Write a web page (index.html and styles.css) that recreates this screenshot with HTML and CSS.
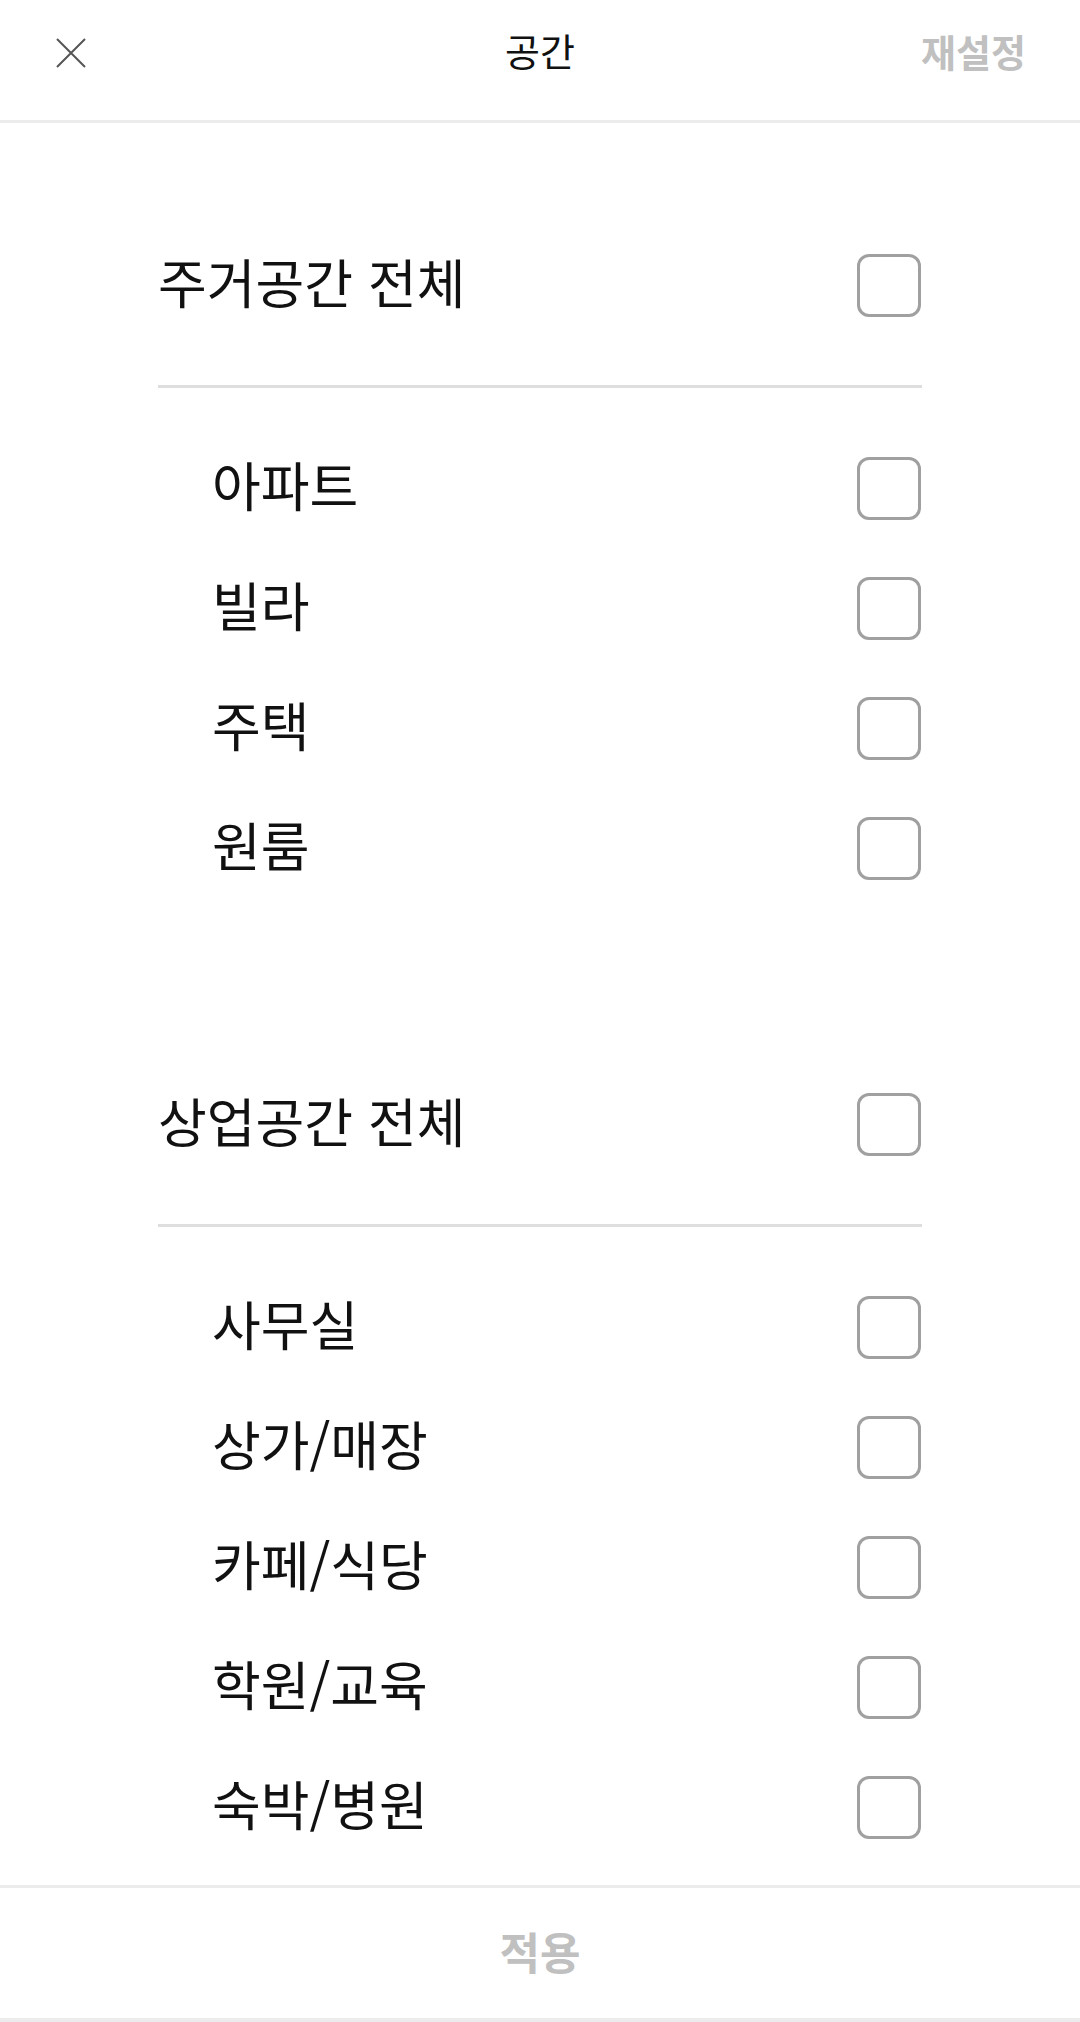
FILE: index.html
```html
<!DOCTYPE html>
<html lang="ko">
<head>
    <meta charset="UTF-8">
    <meta name="viewport" content="width=device-width, initial-scale=1.0">
    <title>공간</title>
    <link rel="stylesheet" href="styles.css">
</head>
<body>
    <header class="top-bar">
        <button class="close-btn" aria-label="닫기">
            <svg width="30" height="30" viewBox="0 0 30 30">
                <path d="M1 1 L29 29 M29 1 L1 29" stroke="#555" stroke-width="2" fill="none"/>
            </svg>
        </button>
        <h1 class="title">공간</h1>
        <button class="reset-btn">재설정</button>
    </header>

    <main class="filter-list">
        <section class="group">
            <div class="row group-head">
                <span class="label">주거공간 전체</span>
                <span class="check"></span>
            </div>
            <hr class="divider">
            <div class="row sub"><span class="label">아파트</span><span class="check"></span></div>
            <div class="row sub"><span class="label">빌라</span><span class="check"></span></div>
            <div class="row sub"><span class="label">주택</span><span class="check"></span></div>
            <div class="row sub"><span class="label">원룸</span><span class="check"></span></div>
        </section>

        <section class="group">
            <div class="row group-head">
                <span class="label">상업공간 전체</span>
                <span class="check"></span>
            </div>
            <hr class="divider">
            <div class="row sub"><span class="label">사무실</span><span class="check"></span></div>
            <div class="row sub"><span class="label">상가/매장</span><span class="check"></span></div>
            <div class="row sub"><span class="label">카페/식당</span><span class="check"></span></div>
            <div class="row sub"><span class="label">학원/교육</span><span class="check"></span></div>
            <div class="row sub"><span class="label">숙박/병원</span><span class="check"></span></div>
        </section>
    </main>

    <footer class="bottom-bar">
        <button class="apply-btn">적용</button>
    </footer>
</body>
</html>
```

FILE: styles.css
```css
* {
    box-sizing: border-box;
}

body {
    margin: 0;
    height: 2022px;
    display: flex;
    flex-direction: column;
    background: #fff;
    color: #111;
    font-family: "Noto Sans CJK KR", "Noto Sans", sans-serif;
}

button {
    font-family: inherit;
    background: none;
    border: none;
    padding: 0;
    cursor: pointer;
}

.top-bar {
    height: 123px;
    flex-shrink: 0;
    display: flex;
    align-items: center;
    justify-content: space-between;
    padding: 0 54px 15px 56px;
    border-bottom: 3px solid #ececec;
    position: relative;
}

.close-btn {
    width: 30px;
    height: 30px;
    display: flex;
}

.title {
    margin: 0;
    font-size: 38px;
    font-weight: 400;
    position: absolute;
    left: 50%;
    top: 49px;
    transform: translate(-50%, -50%);
}

.reset-btn {
    font-size: 38px;
    font-weight: 700;
    color: #c0c0c0;
    margin-bottom: 4px;
}

.filter-list {
    flex: 1;
    padding: 102px 158px 0;
}

.group + .group {
    margin-top: 156px;
}

.row {
    height: 120px;
    display: flex;
    align-items: center;
    justify-content: space-between;
    font-size: 53px;
}

.label {
    margin-bottom: 9px;
}

.sub {
    padding-left: 54px;
}

.divider {
    margin: 40px 0;
    border: none;
    height: 3px;
    background: #dedede;
}

.check {
    width: 64px;
    height: 63px;
    border: 3px solid #a0a0a0;
    border-radius: 12px;
    margin-right: 1px;
}

.bottom-bar {
    height: 137px;
    flex-shrink: 0;
    border-top: 3px solid #ececec;
    border-bottom: 4px solid #ececec;
    display: flex;
}

.apply-btn {
    flex: 1;
    font-size: 44px;
    font-weight: 700;
    color: #c0c0c0;
    padding-bottom: 5px;
}
```
